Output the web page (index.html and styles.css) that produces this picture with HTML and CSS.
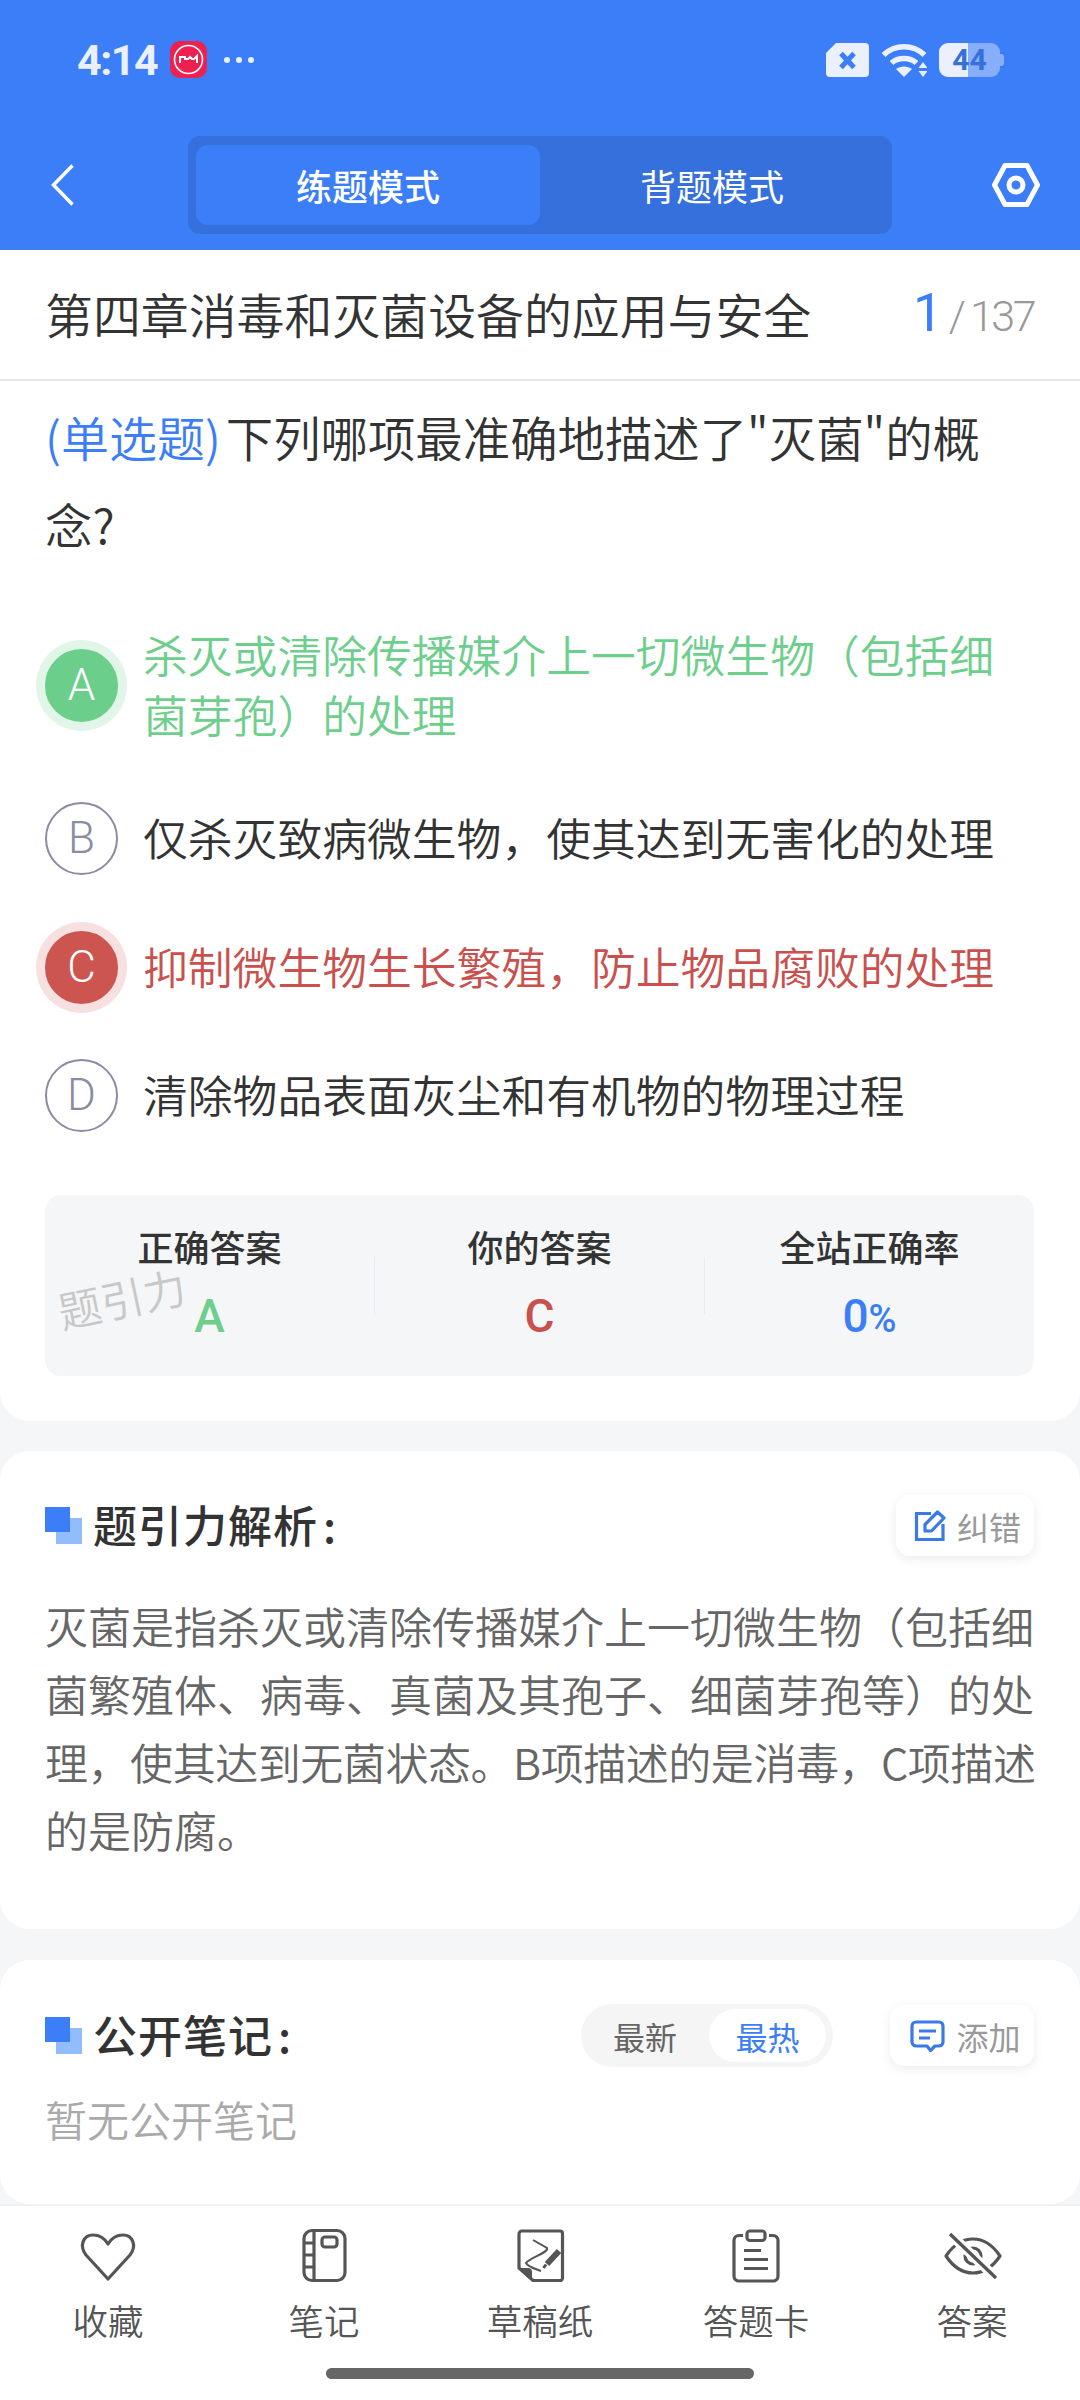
FILE: index.html
```html
<!DOCTYPE html>
<html lang="zh-CN">
<head>
    <meta charset="UTF-8">
    <meta name="viewport" content="width=device-width, initial-scale=1.0">
    <title>练题模式</title>
    <link rel="stylesheet" href="styles.css">
</head>
<body>
    <div class="page">
        <header class="top">
            <div class="status-bar">
                <span class="time">4:14</span>
                <span class="app-icon">
                    <svg viewBox="0 0 37 37" width="37" height="37">
                        <circle cx="18.5" cy="18.5" r="14" fill="none" stroke="#fff" stroke-width="1.6"/>
                        <path d="M10 22v-6h5v2h3l2-2 2 2h2l3-3v7" fill="none" stroke="#fff" stroke-width="2"/>
                    </svg>
                </span>
                <span class="dots"><i></i><i></i><i></i></span>
                <span class="status-right">
                    <svg viewBox="0 0 43 34" width="43" height="34">
                        <path d="M10 0H39a4 4 0 0 1 4 4V30a4 4 0 0 1-4 4H4a4 4 0 0 1-4-4V10Z" fill="#eaf0fe"/>
                        <path d="M15 10.500l13 14M28 10.500l-13 14" stroke="#3b7ef7" stroke-width="5"/>
                    </svg>
                    <svg viewBox="0 0 46 34" width="46" height="34">
                        <path d="M2.500 12C14 1 32 1 43.500 12" fill="none" stroke="#eaf0fe" stroke-width="5.500"/>
                        <path d="M10.500 20C17 14 29 14 35.500 20" fill="none" stroke="#eaf0fe" stroke-width="5.500"/>
                        <path d="M15 26C19 22.500 27 22.500 31 26L23 34Z" fill="#eaf0fe"/>
                        <path d="M42 19l4.500 6h-9ZM42 34l4.500-6h-9Z" fill="#eaf0fe"/>
                    </svg>
                    <span class="battery">44</span>
                </span>
            </div>
            <nav class="nav">
                <svg class="back" viewBox="0 0 23 42" width="23" height="42">
                    <path d="M21.500 1.500L2.500 21l19 19.500" fill="none" stroke="#fff" stroke-width="3.500"/>
                </svg>
                <div class="mode-switch">
                    <span class="mode active">练题模式</span>
                    <span class="mode">背题模式</span>
                </div>
                <svg class="settings" viewBox="0 0 48 44" width="48" height="44">
                    <path d="M13 2.500H35L45.500 22 35 41.500H13L2.500 22Z" fill="none" stroke="#fff" stroke-width="5" stroke-linejoin="round"/>
                    <circle cx="24" cy="22" r="7" fill="none" stroke="#fff" stroke-width="5"/>
                </svg>
            </nav>
        </header>

        <section class="card question-card">
            <div class="chapter">
                <h1>第四章消毒和灭菌设备的应用与安全</h1>
                <div class="counter"><span class="current">1</span><span class="slash">/</span><span class="total">137</span></div>
            </div>
            <p class="question"><span class="q-type">(单选题)</span>下列哪项最准确地描述了"灭菌"的概念?</p>
            <div class="options">
                <div class="option correct">
                    <span class="letter">A</span>
                    <span class="option-text">杀灭或清除传播媒介上一切微生物（包括细菌芽孢）的处理</span>
                </div>
                <div class="option">
                    <span class="letter">B</span>
                    <span class="option-text">仅杀灭致病微生物，使其达到无害化的处理</span>
                </div>
                <div class="option wrong">
                    <span class="letter">C</span>
                    <span class="option-text">抑制微生物生长繁殖，防止物品腐败的处理</span>
                </div>
                <div class="option">
                    <span class="letter">D</span>
                    <span class="option-text">清除物品表面灰尘和有机物的物理过程</span>
                </div>
            </div>
            <div class="stats">
                <div class="stat">
                    <div class="stat-label">正确答案</div>
                    <div class="stat-value green">A</div>
                </div>
                <div class="stat-line"></div>
                <div class="stat">
                    <div class="stat-label">你的答案</div>
                    <div class="stat-value red">C</div>
                </div>
                <div class="stat-line"></div>
                <div class="stat">
                    <div class="stat-label">全站正确率</div>
                    <div class="stat-value blue">0<small>%</small></div>
                </div>
                <div class="watermark">题引力</div>
            </div>
        </section>

        <section class="card analysis-card">
            <div class="card-head">
                <svg class="mark" viewBox="0 0 37 37" width="37" height="37">
                    <rect x="11" y="11" width="26" height="26" fill="#92bdfb"/>
                    <rect width="25" height="25" fill="#3b7ef7"/>
                </svg>
                <h2>题引力解析<span class="colon">:</span></h2>
                <div class="small-btn">
                    <svg viewBox="0 0 32 32" width="32" height="32">
                        <path d="M17 3.500H2.500V29.500H29V14" fill="none" stroke="#3a7ae8" stroke-width="3.200"/>
                        <path d="M11 21v-6.500L23.500 2 30 8 17.500 21Z" fill="none" stroke="#3a7ae8" stroke-width="3.200" stroke-linejoin="round"/>
                    </svg>
                    <span>纠错</span>
                </div>
            </div>
            <p class="analysis">灭菌是指杀灭或清除传播媒介上一切微生物（包括细菌繁殖体、病毒、真菌及其孢子、细菌芽孢等）的处<br><span class="tight">理，使其达到无菌状态。B项描述的是消毒，C项描述</span><br>的是防腐。</p>
        </section>

        <section class="card notes-card">
            <div class="card-head">
                <svg class="mark" viewBox="0 0 37 37" width="37" height="37">
                    <rect x="11" y="11" width="26" height="26" fill="#92bdfb"/>
                    <rect width="25" height="25" fill="#3b7ef7"/>
                </svg>
                <h2>公开笔记<span class="colon">:</span></h2>
                <div class="sort-switch">
                    <span class="sort">最新</span>
                    <span class="sort active">最热</span>
                </div>
                <div class="small-btn add-btn">
                    <svg viewBox="0 0 35 32" width="35" height="32">
                        <path d="M6 2H29a4 4 0 0 1 4 4V22a4 4 0 0 1-4 4H25L20.500 30.500 17 26H6a4 4 0 0 1-4-4V6a4 4 0 0 1 4-4Z" fill="none" stroke="#3a7ae8" stroke-width="3.200" stroke-linejoin="round"/>
                        <path d="M9 11H26M9 18H20" stroke="#3a7ae8" stroke-width="3.200"/>
                    </svg>
                    <span>添加</span>
                </div>
            </div>
            <p class="empty">暂无公开笔记</p>
        </section>

        <footer class="tabbar">
            <div class="tabs">
                <div class="tab">
                    <svg viewBox="0 0 60 60" width="60" height="60">
                        <path d="M30 53L8 29C1 20 5 9 15 9 22 9 27 13 30 18 33 13 38 9 45 9 55 9 59 20 52 29Z" fill="none" stroke="#555" stroke-width="3.200" stroke-linejoin="round"/>
                    </svg>
                    <span>收藏</span>
                </div>
                <div class="tab">
                    <svg viewBox="0 0 60 60" width="60" height="60">
                        <rect x="10" y="4.500" width="41" height="50" rx="8" fill="none" stroke="#555" stroke-width="3.200"/>
                        <path d="M20 4.500V54.500M10 17H20M10 29H20M10 41H20" fill="none" stroke="#555" stroke-width="3.200"/>
                        <rect x="28" y="11" width="15" height="10" rx="3" fill="none" stroke="#555" stroke-width="3.200"/>
                    </svg>
                    <span>笔记</span>
                </div>
                <div class="tab">
                    <svg viewBox="0 0 60 60" width="60" height="60">
                        <path d="M12 5H50a2.500 2.500 0 0 1 2.500 2.500V52a2.500 2.500 0 0 1-2.500 2.500H23L9 42V8a3 3 0 0 1 3-3Z" fill="none" stroke="#555" stroke-width="3.200" stroke-linejoin="round"/>
                        <path d="M10 42H18a4 4 0 0 1 4 4V53Z" fill="#555"/>
                        <path d="M23 14L37 22C39 27 20 31 16 37 18 41 26 43 31 45" fill="none" stroke="#555" stroke-width="2"/>
                        <path d="M37 38L49 25" stroke="#555" stroke-width="6"/>
                        <path d="M33.500 42L36 38.500" stroke="#555" stroke-width="3"/>
                    </svg>
                    <span>草稿纸</span>
                </div>
                <div class="tab">
                    <svg viewBox="0 0 60 60" width="60" height="60">
                        <path d="M17 9.500H13a5 5 0 0 0-5 5V50a5 5 0 0 0 5 5H47a5 5 0 0 0 5-5V14.500a5 5 0 0 0-5-5H43" fill="none" stroke="#555" stroke-width="3.200"/>
                        <rect x="21" y="5" width="18" height="9.500" rx="3" fill="none" stroke="#555" stroke-width="3.200"/>
                        <path d="M18 24.500H35M18 33.500H42M18 42.500H42" stroke="#555" stroke-width="3.200"/>
                    </svg>
                    <span>答题卡</span>
                </div>
                <div class="tab">
                    <svg viewBox="0 0 60 60" width="60" height="60">
                        <path d="M4 30C12 18 21 13 31 13 41 13 50 18 58 30 50 42 41 47 31 47 21 47 12 42 4 30Z" fill="none" stroke="#555" stroke-width="3.200" stroke-linejoin="round"/>
                        <circle cx="31" cy="30" r="8" fill="none" stroke="#555" stroke-width="3.200"/>
                        <path d="M8 8L54 52" stroke="#fff" stroke-width="10"/>
                        <path d="M8 8L54 52" stroke="#555" stroke-width="3.400"/>
                    </svg>
                    <span>答案</span>
                </div>
            </div>
            <div class="home-bar"></div>
        </footer>
    </div>
</body>
</html>
```

FILE: styles.css
```css
* {
    box-sizing: border-box;
}
body {
    margin: 0;
    background: #f4f6f8;
    font-family: "Noto Sans CJK SC", "Noto Sans", sans-serif;
    color: #333;
}
h1, h2, p {
    margin: 0;
    font-weight: 400;
}
.page {
    width: 1080px;
    height: 2400px;
    display: flex;
    flex-direction: column;
    overflow: hidden;
}

/* blue header */
.top {
    height: 250px;
    background: #3b7ef7;
    padding-top: 41px;
}
.status-bar {
    height: 37px;
    display: flex;
    align-items: center;
    padding: 0 76px 0 77px;
}
.time {
    font-family: Roboto, sans-serif;
    font-size: 43px;
    font-weight: 700;
    letter-spacing: -1.500px;
    color: #eaf0fe;
    width: 93px;
}
.app-icon {
    width: 37px;
    height: 37px;
    border-radius: 10px;
    background: #ee2050;
    display: flex;
}
.dots {
    display: flex;
    gap: 6px;
    margin-left: 17px;
}
.dots i {
    width: 6px;
    height: 6px;
    border-radius: 50%;
    background: #eaf0fe;
}
.status-right {
    margin-left: auto;
    display: flex;
    align-items: center;
    gap: 12px;
}
.battery {
    position: relative;
    width: 61px;
    height: 34px;
    margin-right: 4px;
    border-radius: 9px;
    background: linear-gradient(90deg, #eaf0fe 29px, #86aefb 29px);
    color: #3670dc;
    font-family: Roboto, sans-serif;
    font-size: 30px;
    font-weight: 700;
    line-height: 34px;
    text-align: center;
}
.battery::after {
    content: '';
    position: absolute;
    right: -4px;
    top: 11px;
    width: 4px;
    height: 12px;
    border-radius: 0 3px 3px 0;
    background: #86aefb;
}
.nav {
    margin-top: 58px;
    height: 98px;
    display: flex;
    align-items: center;
    padding: 0 40px 0 51px;
}
.mode-switch {
    width: 704px;
    height: 98px;
    margin-left: 114px;
    padding: 9px 8px;
    display: flex;
    background: #3670dc;
    border-radius: 12px;
}
.mode {
    flex: 1;
    display: flex;
    align-items: center;
    justify-content: center;
    color: #fff;
    font-size: 36px;
    border-radius: 12px;
}
.mode.active {
    background: #3b7ef7;
    font-weight: 500;
}
.settings {
    margin-left: auto;
}

/* cards */
.card {
    background: #fff;
    border-radius: 30px;
    padding: 0 46px 0 45px;
}
.question-card {
    height: 1171px;
    border-radius: 0 0 30px 30px;
    padding-bottom: 45px;
}
.chapter {
    height: 131px;
    margin: 0 -46px 0 -45px;
    padding: 0 46px 4px 45px;
    display: flex;
    align-items: center;
    justify-content: space-between;
    border-bottom: 2px solid #e6e6e6;
}
.chapter h1 {
    font-size: 47.900px;
    font-weight: 350;
    color: #333;
}
.counter {
    font-family: Roboto, sans-serif;
    font-weight: 300;
    color: #999;
    font-size: 43px;
    display: flex;
    align-items: baseline;
}
.current {
    color: #3b7ef7;
    font-size: 53px;
    font-weight: 400;
}
.slash {
    margin-left: 6px;
}
.total {
    margin-left: 4px;
    letter-spacing: -2.500px;
}
.question {
    margin-top: 12px;
    font-size: 47.400px;
    font-weight: 350;
    line-height: 87px;
}
.q-type {
    color: #3b7ef7;
    font-size: 48px;
    margin-right: 5px;
}
.options {
    margin-top: 56.500px;
    display: flex;
    flex-direction: column;
    gap: 55.500px;
}
.option {
    display: flex;
    align-items: center;
    min-height: 73px;
}
.letter {
    flex: none;
    width: 73px;
    height: 73px;
    border-radius: 50%;
    border: 2px solid #8a8ca3;
    color: #8a8ca3;
    font-family: Roboto, sans-serif;
    font-size: 44px;
    font-weight: 300;
    line-height: 69px;
    text-align: center;
}
.option-text {
    margin-left: 25px;
    padding-bottom: 3px;
    font-size: 44.800px;
    font-weight: 350;
    line-height: 60px;
}
.option.correct .letter {
    background: #6bcf8b;
    border-color: #6bcf8b;
    color: #fff;
    box-shadow: 0 0 0 9px #e1f5e8;
}
.option.correct .option-text {
    color: #6ecf8d;
}
.option.wrong .letter {
    background: #cd5550;
    border-color: #cd5550;
    color: #fff;
    box-shadow: 0 0 0 9px #f6e0e0;
}
.option.wrong .option-text {
    color: #c9504d;
}
.stats {
    position: relative;
    height: 181px;
    margin-top: 63px;
    padding: 26px 0 0;
    display: flex;
    background: #f4f6f8;
    border-radius: 16px;
}
.stat {
    flex: 1;
    text-align: center;
}
.stat-label {
    font-size: 36px;
    font-weight: 500;
    line-height: 50px;
}
.stat-value {
    margin-top: 20px;
    font-family: Roboto, sans-serif;
    font-size: 46px;
    font-weight: 500;
    line-height: 50px;
}
.stat-value small {
    font-size: 38px;
}
.green {
    color: #6ecf8d;
}
.red {
    color: #c9504d;
}
.blue {
    color: #3b7ef7;
}
.stat-line {
    width: 1px;
    height: 58px;
    margin-top: 36px;
    background: #e9ebee;
}
.watermark {
    position: absolute;
    left: 12px;
    top: 72px;
    font-size: 43px;
    font-weight: 350;
    line-height: 60px;
    color: #c8c8c8;
    transform: rotate(-12deg);
}
.analysis-card {
    height: 478px;
    margin-top: 30px;
    padding-top: 44px;
}
.notes-card {
    height: 244px;
    margin-top: 31px;
    padding-top: 45px;
}
.card-head {
    height: 61px;
    display: flex;
    align-items: center;
}
.mark {
    flex: none;
}
.card-head h2 {
    margin: -3px 0 0 11px;
    font-size: 44px;
    font-weight: 500;
    letter-spacing: 1px;
}
.colon {
    margin-left: 5px;
}
.small-btn {
    margin-left: auto;
    width: 138px;
    height: 61px;
    padding-left: 5px;
    display: flex;
    align-items: center;
    justify-content: center;
    gap: 11px;
    background: #fff;
    border-radius: 14px;
    box-shadow: 0 3px 12px rgba(0, 0, 0, 0.08);
    color: #999;
    font-size: 32px;
}
.analysis {
    margin-top: 35px;
    width: 995px;
    font-size: 43px;
    font-weight: 350;
    line-height: 68px;
    color: #666;
}
.tight {
    letter-spacing: -0.450px;
}
.sort-switch {
    margin-left: auto;
    width: 252px;
    height: 63px;
    padding: 5px 7px 5px 0;
    display: flex;
    background: #f5f5f5;
    border-radius: 32px;
}
.sort {
    flex: 1;
    display: flex;
    align-items: center;
    justify-content: center;
    font-size: 32px;
    color: #666;
    border-radius: 27px;
}
.sort.active {
    flex: none;
    width: 117px;
    background: #fff;
    color: #3b7ef7;
}
.add-btn {
    margin-left: 57px;
    width: 144px;
    padding-left: 7px;
}
.empty {
    margin-top: 23px;
    font-size: 42px;
    font-weight: 350;
    line-height: 60px;
    color: #aaa;
}

/* bottom bar */
.tabbar {
    margin-top: auto;
    height: 196px;
    padding-top: 20px;
    background: #fff;
    border-top: 2px solid #f0f1f3;
}
.tabs {
    display: flex;
}
.tab {
    flex: 1;
    display: flex;
    flex-direction: column;
    align-items: center;
    gap: 10px;
    font-size: 35.500px;
    font-weight: 350;
    line-height: 48px;
    color: #555;
}
.home-bar {
    width: 428px;
    height: 11px;
    margin: 24px auto 0;
    border-radius: 6px;
    background: #666;
}
```
